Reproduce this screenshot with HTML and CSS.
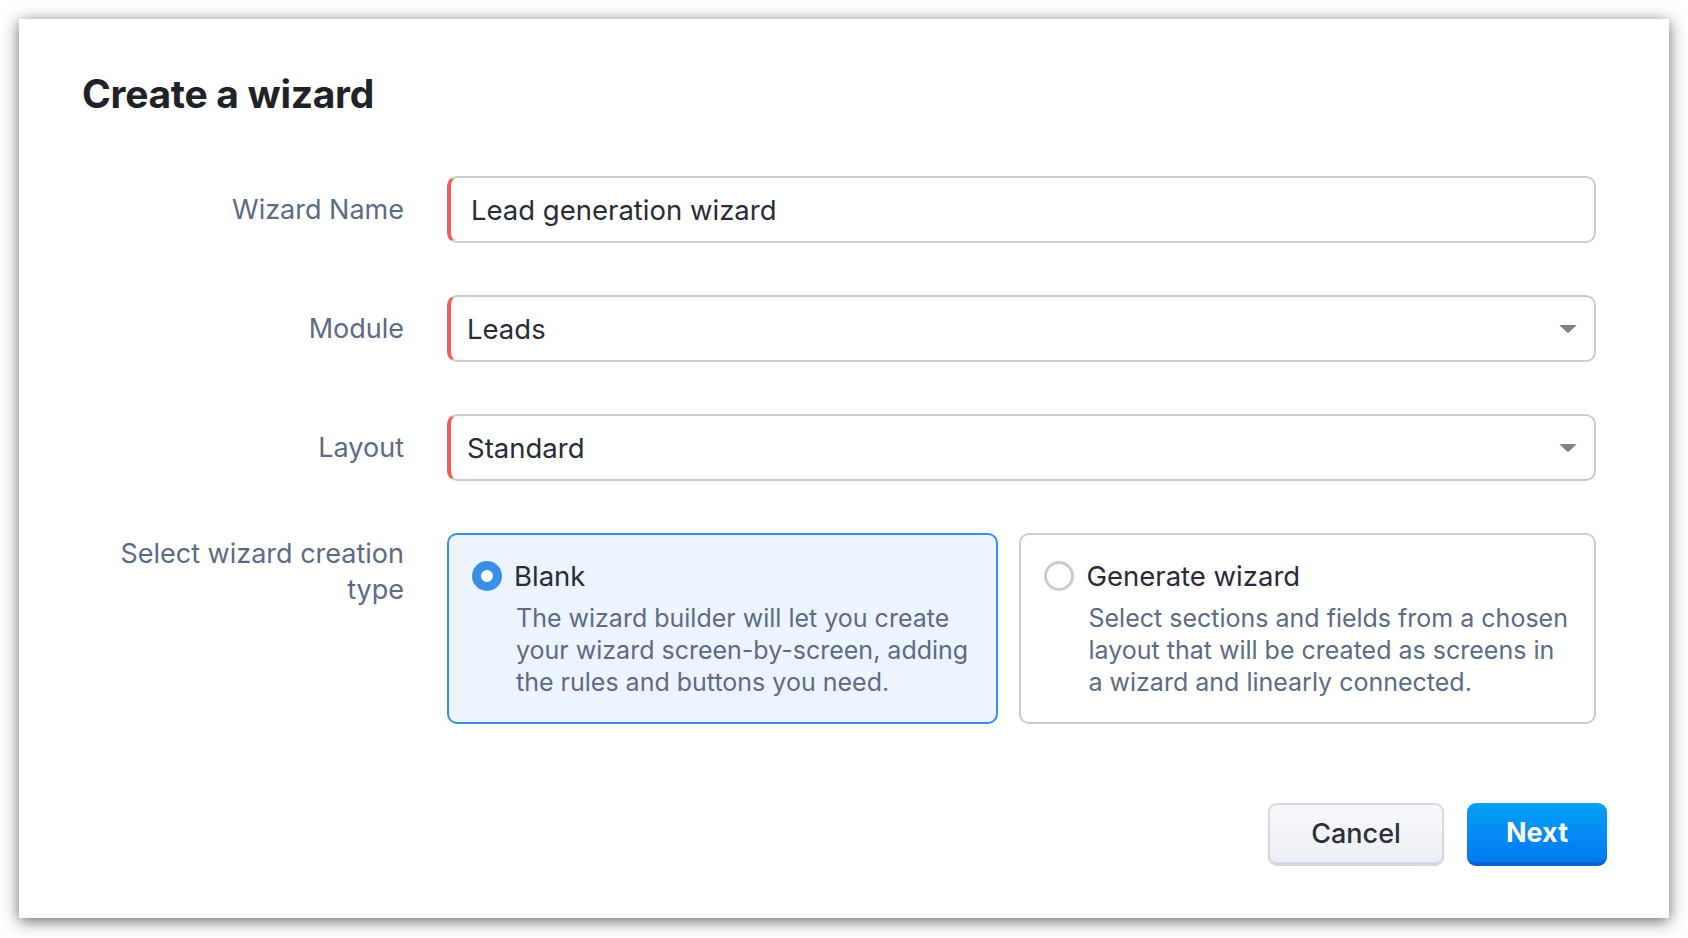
FILE: index.html
```html
<!DOCTYPE html>
<html lang="en">
  <head>
    <meta charset="UTF-8" />
    <link rel="stylesheet" href="styles.css">
  </head>
  <body>
    <div class="dialog">
      <h1>Create a wizard</h1>
      <div class="form">
        <label class="label">Wizard Name</label>
        <div class="field">
          <span class="value">Lead generation wizard</span>
        </div>

        <label class="label">Module</label>
        <div class="field select">
          <span class="value">Leads</span>
          <svg class="caret" width="18" height="10" viewBox="0 0 18 10">
            <path d="M1.5 1 H16.5 Q17.6 1 16.8 1.9 L9.8 8.6 Q9 9.3 8.2 8.6 L1.2 1.9 Q0.4 1 1.5 1 Z" fill="#7d818b" />
          </svg>
        </div>

        <label class="label">Layout</label>
        <div class="field select">
          <span class="value">Standard</span>
          <svg class="caret" width="18" height="10" viewBox="0 0 18 10">
            <path d="M1.5 1 H16.5 Q17.6 1 16.8 1.9 L9.8 8.6 Q9 9.3 8.2 8.6 L1.2 1.9 Q0.4 1 1.5 1 Z" fill="#7d818b" />
          </svg>
        </div>

        <label class="label top">Select wizard creation type</label>
        <div class="types">
          <div class="card active">
            <span class="radio"></span>
            <div class="cardBody">
              <div class="cardTitle">Blank</div>
              <div class="cardText">The wizard builder will let you create your wizard screen-by-screen, adding the rules and buttons you need.</div>
            </div>
          </div>
          <div class="card">
            <span class="radio"></span>
            <div class="cardBody">
              <div class="cardTitle">Generate wizard</div>
              <div class="cardText">Select sections and fields from a chosen layout that will be created as screens in a wizard and linearly connected.</div>
            </div>
          </div>
        </div>
      </div>
      <div class="actions">
        <button class="btn cancel">Cancel</button>
        <button class="btn next">Next</button>
      </div>
    </div>
  </body>
</html>
```

FILE: styles.css
```css
body {
  margin: 0;
  background: #ffffff;
  font-family: "Inter", "Lato", sans-serif;
}
.dialog {
  margin: 19px;
  height: 899px;
  box-sizing: border-box;
  background: #ffffff;
  box-shadow: 0 3px 15px rgba(0, 0, 0, 0.6);
  padding: 0 62px 0 63px;
  display: flex;
  flex-direction: column;
}
.dialog h1 {
  margin: 0;
  padding-top: 51px;
  font-size: 39px;
  font-weight: 700;
  color: #1f2229;
  letter-spacing: -0.3px;
  line-height: 48px;
}
.form {
  margin: 58px 11px 0 0;
  display: grid;
  grid-template-columns: 322px 1fr;
  column-gap: 43px;
  row-gap: 52px;
}
.label {
  font-size: 27px;
  color: #5b6b86;
  text-align: right;
  align-self: center;
}
.label.top {
  align-self: start;
  margin-top: 3px;
  line-height: 36px;
  padding-left: 30px;
}
.field {
  height: 67px;
  box-sizing: border-box;
  border: 2px solid #c8ccd3;
  border-left: 4px solid #f55e56;
  border-radius: 10px;
  display: flex;
  align-items: center;
  padding: 0 17px 0 20px;
}
.field.select {
  padding-left: 16px;
}
.field .value {
  flex: 1;
  font-size: 27.5px;
  color: #272c38;
}
.caret {
  display: block;
}
.types {
  display: flex;
  gap: 21px;
}
.card {
  flex: 1;
  height: 191px;
  box-sizing: border-box;
  border: 2px solid #c8ccd3;
  border-radius: 10px;
  padding: 24px 23px 0 23px;
  display: flex;
  gap: 12px;
}
.card:last-child {
  flex: 1.05;
}
.card.active {
  border-color: #3a8ee8;
  background: #eef4fd;
}
.radio {
  flex: none;
  width: 30px;
  height: 30px;
  margin-top: 2px;
  box-sizing: border-box;
  border-radius: 50%;
  border: 3px solid #c7cbd2;
  background: #ffffff;
}
.card.active .radio {
  border: 9px solid #3a8ee8;
}
.cardTitle {
  font-size: 27.5px;
  color: #272c38;
  line-height: 34px;
}
.cardText {
  margin-top: 9px;
  padding-left: 2px;
  font-size: 25px;
  line-height: 32px;
  color: #5b6b86;
}
.actions {
  margin-top: auto;
  margin-bottom: 52px;
  display: flex;
  justify-content: flex-end;
  gap: 23px;
}
.btn {
  font-family: "Inter", "Lato", sans-serif;
  font-size: 27px;
  height: 63px;
  border-radius: 9px;
  cursor: pointer;
}
.cancel {
  width: 176px;
  color: #2b303b;
  font-weight: 500;
  background: linear-gradient(#f8f9fb, #eceff5);
  border: 2px solid #d3d7df;
  border-bottom-width: 4px;
}
.next {
  width: 140px;
  color: #ffffff;
  font-weight: 700;
  background: linear-gradient(#06a0f5, #0079f2);
  border: none;
  border-bottom: 4px solid #0465cc;
}
```
